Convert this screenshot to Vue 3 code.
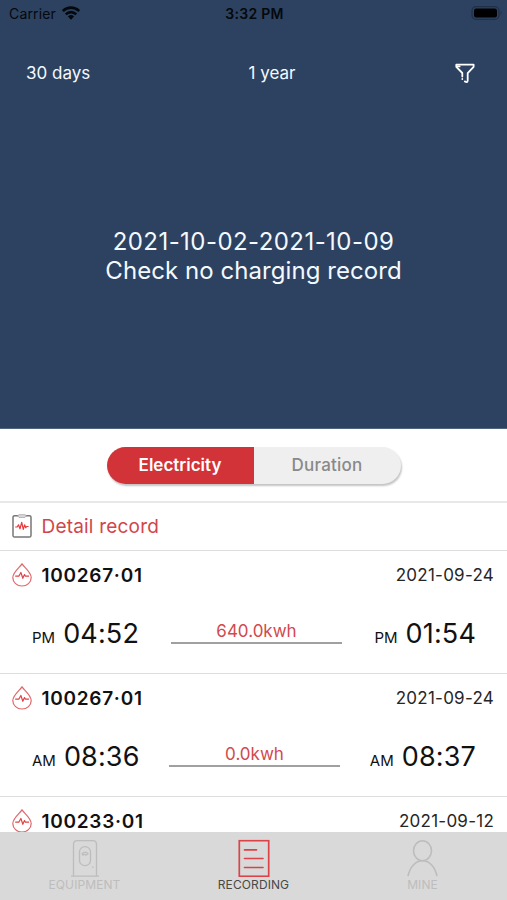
<script setup>
const records = [
  { id: '100267·01', date: '2021-09-24', from: ['PM', '04:52'], to: ['PM', '01:54'], energy: '640.0kwh', shift: 'a' },
  { id: '100267·01', date: '2021-09-24', from: ['AM', '08:36'], to: ['AM', '08:37'], energy: '0.0kwh', shift: 'b' },
  { id: '100233·01', date: '2021-09-12' }
]
</script>

<template>
  <div class="screen">
    <section class="hero">
      <div class="status">
        <div class="carrier">
          <span>Carrier</span>
          <svg class="wifi" viewBox="0 0 18 14" width="18" height="14">
            <g fill="none" stroke="#05080d" stroke-width="2.6">
              <path d="M.8 5a11.700 11.700 0 0 1 16.400 0" />
              <path d="M3.800 8.300a7.400 7.400 0 0 1 10.400 0" />
            </g>
            <path d="M5.900 10.500a4.500 4.500 0 0 1 6.200 0L9 13.800z" fill="#05080d" />
          </svg>
        </div>
        <span class="clock">3:32 PM</span>
        <svg class="battery" viewBox="0 0 32 14" width="32" height="14">
          <rect x="1" y=".7" width="27" height="12.6" rx="4" fill="none" stroke="#1f3049" stroke-width="1.2" />
          <rect x="3" y="2.6" width="23" height="8.8" rx="2.2" fill="#000" />
          <path d="M29.6 4.8q2 2.2 0 4.4z" fill="#1f3049" />
        </svg>
      </div>
      <nav class="range">
        <span class="days">30 days</span>
        <span class="year">1 year</span>
        <svg class="filter" viewBox="0 0 20 21" width="20" height="21" fill="none" stroke="#fff" stroke-width="1.8" stroke-linejoin="round" stroke-linecap="round">
          <path d="M9.800 18.400q2.900 1.700 2.900-.8V10.200L18.600 3.800V1.600H1.300V3.800L7.300 10v3.500" />
          <path d="M2 3.400h2.600M7.300 16v.1" />
        </svg>
      </nav>
      <div class="empty">
        <span class="period">2021-10-02-2021-10-09</span>
        <span class="message">Check no charging record</span>
      </div>
    </section>

    <div class="switcher">
      <div class="segments">
        <span class="segment active">Electricity</span>
        <span class="segment">Duration</span>
      </div>
    </div>

    <div class="heading">
      <svg viewBox="0 0 20 24" width="20" height="24" fill="none">
        <rect x="1" y="1.7" width="18" height="21.4" rx="1.6" stroke="#777" stroke-width="1.5" />
        <path d="M5.5 1.8L7 .7h6l1.5 1.1L13 3.4H7z" fill="#ddd" stroke="#999" stroke-width=".7" />
        <path d="M3.200 13h2l1.300-2.200 1.500 4 1.700-6.500 1.600 7 1.300-4.500 1.200 3 .8-1.300h2" stroke="#e8383c" stroke-width="1.200" stroke-linejoin="round" />
      </svg>
      <span>Detail record</span>
    </div>

    <ul class="records">
      <li v-for="(r, i) in records" :key="i" class="record">
        <div class="top">
          <svg viewBox="0 0 20 24" width="20" height="24" fill="none" stroke="#e0666a">
            <path d="M10 .9C7.800 4.200 .8 9.200 .8 14.500 .8 19.400 5 23 10 23s9.200-3.600 9.200-8.500C19.200 9.200 12.200 4.200 10 .9z" stroke-width="1.200" />
            <path d="M3.200 13.200h3.600l2.100-3.700 1.900 5.800 1.700-3.800 1 1.700H17" stroke="#df4348" stroke-width="1.200" stroke-linejoin="round" />
          </svg>
          <span class="id">{{ r.id }}</span>
          <span class="date">{{ r.date }}</span>
        </div>
        <div v-if="r.energy" class="session" :class="r.shift">
          <div class="time from"><small>{{ r.from[0] }}</small><b>{{ r.from[1] }}</b></div>
          <div class="energy">{{ r.energy }}</div>
          <div class="time to"><small>{{ r.to[0] }}</small><b>{{ r.to[1] }}</b></div>
        </div>
      </li>
    </ul>

    <footer class="tabs">
      <div class="tab">
        <svg viewBox="0 0 32 40" width="32" height="38" preserveAspectRatio="none" fill="none" stroke="#bdbdbd" stroke-width="1.300">
          <path d="M4.500 39V5.500Q4.500 1.700 8.300 1.700h15.400q3.800 0 3.800 3.800V39M2 39.200h28" />
          <rect x="10.500" y="8" width="11" height="20" rx="5.500" />
          <path d="M13 15.500l2-1.500h2.500l1.500 1.500-2 1.500-1.500-1-1.500 1zM23 29.500h1.500" />
        </svg>
        <span class="equipment">EQUIPMENT</span>
      </div>
      <div class="tab current">
        <svg viewBox="0 0 32 40" width="32" height="38" preserveAspectRatio="none" fill="none" stroke="#dc4248" stroke-width="1.700">
          <rect x="1.300" y="1.800" width="29.400" height="37.400" />
          <path d="M6.500 11.500h12M6.500 20.500h18.500M6.500 30h18.500" stroke-linecap="round" />
        </svg>
        <span class="recording">RECORDING</span>
      </div>
      <div class="tab">
        <svg viewBox="0 0 32 40" width="32" height="38" preserveAspectRatio="none" fill="none" stroke="#bdbdbd" stroke-width="1.600">
          <ellipse cx="15.500" cy="12.300" rx="9" ry="10.500" />
          <path d="M1 39C3 29 8.500 23 15.500 23s12.500 6 14.500 16" />
        </svg>
        <span class="mine">MINE</span>
      </div>
    </footer>
  </div>
</template>

<style>
body { margin: 0; background: #fff; }
</style>

<style scoped>
.screen { width: 507px; height: 900px; overflow: hidden; display: flex; flex-direction: column; background: #fff; color: #111; font-family: Inter, "Liberation Sans", sans-serif; white-space: nowrap; }
.hero { flex: none; height: 429px; box-sizing: border-box; border-bottom: 1px solid #50647f; background: #2c4260; display: flex; flex-direction: column; color: #f4f9ff; }
.status { height: 27px; display: grid; grid-template-columns: 1fr auto 1fr; align-items: center; padding: 0 4px 0 9px; color: #05080d; font-size: 14px; }
.carrier { display: flex; align-items: center; gap: 6px; letter-spacing: .15px; }
.wifi { margin-top: -2px; }
.clock { font-weight: 600; margin-right: 3px; letter-spacing: .3px; }
.battery { justify-self: end; margin-top: -1px; }
.range { height: 92px; display: grid; grid-template-columns: 1fr auto 1fr; align-items: center; padding: 0 32px 0 26px; font-size: 17px; }
.year { margin-left: 43px; }
.filter { justify-self: end; }
.empty { margin-top: 108px; display: flex; flex-direction: column; align-items: center; font-size: 24px; line-height: 29px; }
.period { letter-spacing: .44px; }
.message { letter-spacing: .06px; }
.switcher { flex: none; height: 74px; box-sizing: border-box; border-bottom: 2px solid #e8e8e8; display: flex; justify-content: center; align-items: center; }
.segments { width: 294px; height: 37px; display: flex; border-radius: 19px; overflow: hidden; box-shadow: 1px 2px 2px #c4c4c4; background: #efefef; }
.segment { flex: 1; display: flex; align-items: center; justify-content: center; font-size: 17px; font-weight: 500; color: #898989; letter-spacing: .2px; }
.active { background: #d23338; color: #fff; font-weight: 600; letter-spacing: 0; }
.heading { flex: none; height: 48px; box-sizing: border-box; border-bottom: 1px solid #ddd; padding-left: 12px; display: flex; align-items: center; gap: 9.500px; color: #d2454a; font-size: 19px; letter-spacing: .2px; }
.heading svg { margin-top: -1px; }
.records { flex: 1; min-height: 0; overflow: hidden; margin: 0; padding: 0; list-style: none; }
.record { height: 123px; box-sizing: border-box; border-bottom: 1px solid #ddd; }
.top { height: 48px; display: flex; align-items: center; padding: 0 13px 0 12px; }
.id { margin-left: 9.500px; font-size: 19px; font-weight: 600; letter-spacing: .72px; }
.date { margin-left: auto; font-size: 17px; letter-spacing: .25px; color: #262626; }
.session { display: grid; height: 50px; grid-template-columns: 171px 171px 1fr; align-items: start; }
.session.b { grid-template-columns: 169px 171px 1fr; }
.time { display: flex; align-items: baseline; padding-top: 18px; gap: 8px; line-height: 34px; }
.time small { font-size: 15px; }
.time b { font-size: 27px; font-weight: 400; letter-spacing: .15px; }
.from { padding-left: 32px; }
.to { justify-content: flex-end; padding-right: 31px; }
.energy { height: 45px; box-sizing: border-box; padding-top: 22px; border-bottom: 2px solid #a0a0a0; text-align: center; color: #d2494e; font-size: 17px; line-height: 20px; }
.tabs { flex: none; height: 68px; background: #d9d9d9; display: grid; grid-template-columns: repeat(3, 1fr); }
.tab { display: flex; flex-direction: column; align-items: center; padding-top: 7px; font-size: 12px; line-height: 15px; letter-spacing: .1px; color: #bdbdbd; }
.current { color: #484848; }
</style>
